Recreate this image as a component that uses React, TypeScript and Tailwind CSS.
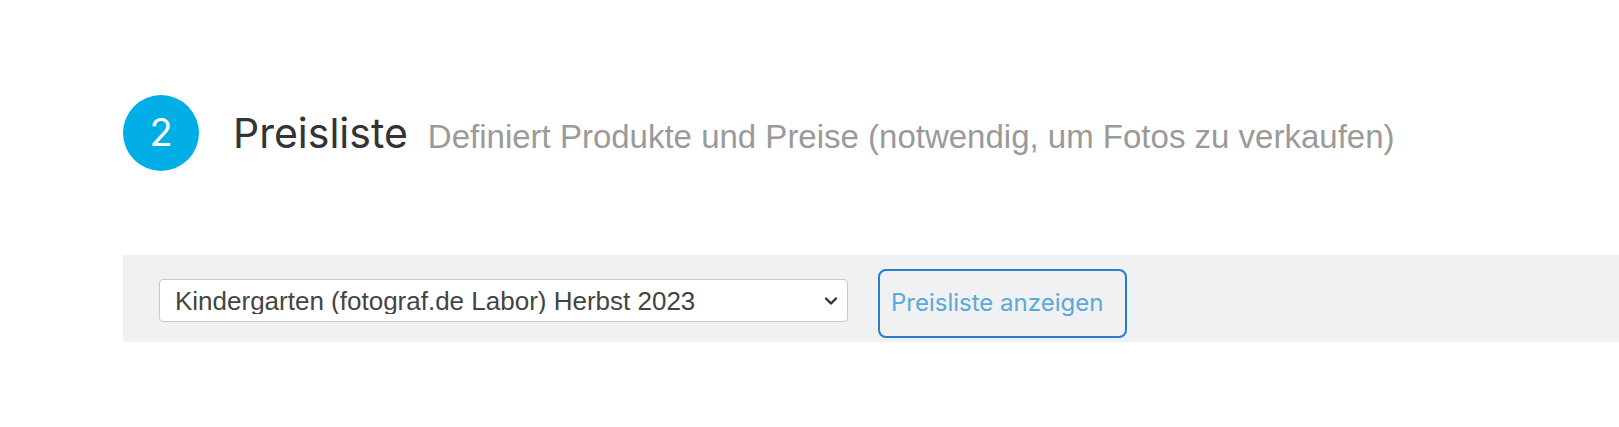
import React from "react";

const SELECT_OPTIONS = [
  "Kindergarten (fotograf.de Labor) Herbst 2023",
  "Schule (fotograf.de Labor) Frühjahr 2024",
];

export default function App() {
  return (
    <div className="min-h-screen bg-white pt-[95px] pl-[123px]" style={{ fontFamily: "Inter, sans-serif" }}>
      {/* step header */}
      <div className="flex items-center">
        <div className="flex h-[76px] w-[76px] shrink-0 items-center justify-center rounded-full bg-[#00aee6] pb-[2px] text-[38px] leading-none text-white">
          2
        </div>
        <div className="ml-[34px] flex items-baseline">
          <h2 className="text-[41px] leading-none text-[#333]">Preisliste</h2>
          <span
            className="ml-[20px] text-[33px] leading-none text-[#9a9a9a]"
            style={{ fontFamily: "'Liberation Sans', Arial, sans-serif" }}
          >
            Definiert Produkte und Preise (notwendig, um Fotos zu verkaufen)
          </span>
        </div>
      </div>

      {/* toolbar */}
      <div className="mt-[84px] flex h-[87px] items-start bg-[#f0f1f3] pl-[36px]">
        <div className="relative mt-[24px] w-[689px]">
          <select
            defaultValue={SELECT_OPTIONS[0]}
            className="h-[43px] w-full appearance-none rounded-[4px] border border-[#c8c8c8] bg-white pl-[15px] pr-[40px] text-[26px] leading-none text-[#444]"
            style={{ fontFamily: "'Liberation Sans', Arial, sans-serif" }}
          >
            {SELECT_OPTIONS.map((o) => (
              <option key={o}>{o}</option>
            ))}
          </select>
          <svg
            className="pointer-events-none absolute right-[10px] top-1/2 -translate-y-1/2"
            width="14"
            height="10"
            viewBox="0 0 14 10"
            fill="none"
          >
            <path d="M2 2.5l5 5 5-5" stroke="#333" strokeWidth="2.4" strokeLinecap="round" strokeLinejoin="round" />
          </svg>
        </div>
        <button className="ml-[30px] mt-[14px] h-[69px] w-[249px] rounded-[8px] border-2 border-[#2a7dc9] pl-[11px] pb-[2px] text-left text-[24px] text-[#5aa9d6]">
          Preisliste anzeigen
        </button>
      </div>
    </div>
  );
}
